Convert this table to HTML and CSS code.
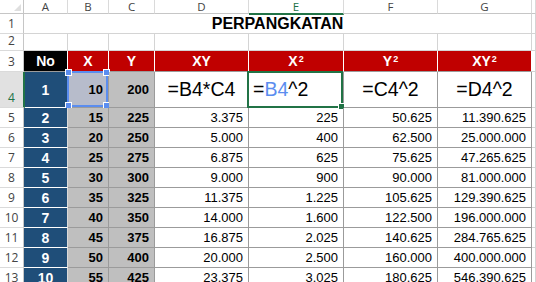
FILE: index.html
```html
<!DOCTYPE html>
<html>
<head>
<meta charset="utf-8">
<link rel="stylesheet" href="styles.css">
</head>
<body>
<div class="sheet">
  <div class="corner"><span class="tri"></span></div>
  <div class="ch">A</div><div class="ch">B</div><div class="ch">C</div><div class="ch">D</div><div class="ch sel">E</div><div class="ch">F</div><div class="ch">G</div><div class="ch last"></div>

  <div class="rh">1</div><div class="title">PERPANGKATAN</div><div class="c"></div>

  <div class="rh">2</div><div class="c"></div><div class="c"></div><div class="c"></div><div class="c"></div><div class="c"></div><div class="c"></div><div class="c"></div><div class="c"></div>

  <div class="rh">3</div><div class="hd blk">No</div><div class="hd">X</div><div class="hd">Y</div><div class="hd">XY</div><div class="hd">X<sup>2</sup></div><div class="hd">Y<sup>2</sup></div><div class="hd">XY<sup>2</sup></div><div class="c"></div>

  <div class="rh rsel">4</div><div class="no">1</div><div class="bc ref">10<span class="refbox"><i class="h tl"></i><i class="h tr"></i><i class="h bl"></i><i class="h br"></i></span></div><div class="bc">200</div><div class="f">=B4*C4</div><div class="f edit">=<span class="bref">B4</span>^2<span class="active"><i class="fill"></i></span></div><div class="f">=C4^2</div><div class="f">=D4^2</div><div class="c"></div>

  <div class="rh">5</div><div class="no">2</div><div class="bc">15</div><div class="bc">225</div><div class="n">3.375</div><div class="n">225</div><div class="n">50.625</div><div class="n">11.390.625</div><div class="c"></div>
  <div class="rh">6</div><div class="no">3</div><div class="bc">20</div><div class="bc">250</div><div class="n">5.000</div><div class="n">400</div><div class="n">62.500</div><div class="n">25.000.000</div><div class="c"></div>
  <div class="rh">7</div><div class="no">4</div><div class="bc">25</div><div class="bc">275</div><div class="n">6.875</div><div class="n">625</div><div class="n">75.625</div><div class="n">47.265.625</div><div class="c"></div>
  <div class="rh">8</div><div class="no">5</div><div class="bc">30</div><div class="bc">300</div><div class="n">9.000</div><div class="n">900</div><div class="n">90.000</div><div class="n">81.000.000</div><div class="c"></div>
  <div class="rh">9</div><div class="no">6</div><div class="bc">35</div><div class="bc">325</div><div class="n">11.375</div><div class="n">1.225</div><div class="n">105.625</div><div class="n">129.390.625</div><div class="c"></div>
  <div class="rh">10</div><div class="no">7</div><div class="bc">40</div><div class="bc">350</div><div class="n">14.000</div><div class="n">1.600</div><div class="n">122.500</div><div class="n">196.000.000</div><div class="c"></div>
  <div class="rh">11</div><div class="no">8</div><div class="bc">45</div><div class="bc">375</div><div class="n">16.875</div><div class="n">2.025</div><div class="n">140.625</div><div class="n">284.765.625</div><div class="c"></div>
  <div class="rh">12</div><div class="no">9</div><div class="bc">50</div><div class="bc">400</div><div class="n">20.000</div><div class="n">2.500</div><div class="n">160.000</div><div class="n">400.000.000</div><div class="c"></div>
  <div class="rh">13</div><div class="no">10</div><div class="bc">55</div><div class="bc">425</div><div class="n">23.375</div><div class="n">3.025</div><div class="n">180.625</div><div class="n">546.390.625</div><div class="c"></div>
</div>
</body>
</html>
```

FILE: styles.css
```css
* { box-sizing: border-box; margin: 0; padding: 0; }
html, body { width: 536px; height: 282px; overflow: hidden; background: #fff; }
body { font-family: "Liberation Sans", Arial, sans-serif; color: #000; }

.sheet {
  display: grid;
  grid-template-columns: 24px 44px 41px 46px 94px 95px 94px 94px 1fr;
  grid-template-rows: 14px 20px 17px 21px 36px repeat(9, 20px);
  width: 536px;
  font-size: 13px;
}
.sheet > div {
  border-right: 1px solid #d4d4d4;
  border-bottom: 1px solid #d4d4d4;
  display: flex;
  align-items: center;
  position: relative;
  white-space: nowrap;
}

/* headers */
.sheet > .corner { border-right-color: #c6c6c6; border-bottom-color: #c6c6c6; }
.tri {
  position: absolute; right: 2px; bottom: 2px;
  width: 0; height: 0;
  border-left: 7px solid transparent;
  border-bottom: 7px solid #dfdfdf;
}
.sheet > .ch {
  justify-content: center;
  font-family: "Open Sans", "Liberation Sans", sans-serif;
  font-size: 11.5px; line-height: 13px;
  color: #444;
  border-right-color: #dadada;
  border-bottom-color: #c6c6c6;
}
.sheet > .ch.sel { color: #217346; border-bottom: 2px solid #217346; margin-bottom: -1px; z-index: 2; }
.sheet > .rh {
  justify-content: center;
  align-items: flex-end;
  padding-bottom: 1px;
  font-family: "Open Sans", "Liberation Sans", sans-serif;
  font-size: 12px; line-height: 16px;
  color: #444;
  border-right-color: #c6c6c6;
  border-bottom-color: #dadada;
}
.sheet > .rh.rsel { background: #e1e1e1; color: #217346; border-right: 2px solid #217346; margin-right: -1px; z-index: 2; }

.sheet > .title {
  grid-column: 2 / span 7;
  justify-content: center;
  font-weight: bold;
  font-size: 16px;
}

/* table header row */
.sheet > .hd {
  background: #c00000;
  color: #fff;
  font-weight: bold;
  font-size: 14px;
  justify-content: center;
  border-right-color: #fff;
  border-bottom-color: #9b9b9b;
}
.sheet > .hd.blk { background: #000; }
.hd sup { font-size: 9px; position: relative; top: -2px; margin-left: 1px; }

/* No column */
.sheet > .no {
  background: #1f4e79;
  color: #fff;
  font-weight: bold;
  font-size: 14px;
  justify-content: center;
  border-right-color: #d9d9d9;
  border-bottom-color: #fff;
}

/* X / Y columns */
.sheet > .bc {
  background: #bfbfbf;
  font-weight: bold;
  justify-content: flex-end;
  padding-right: 5px;
  border-right-color: #9b9b9b;
  border-bottom-color: #9b9b9b;
}
.sheet > .bc.ref { background: #b7bccb; }
.refbox {
  position: absolute; left: -1px; top: -1px; right: 0; bottom: 0;
  border: 2px solid #5b8def;
}
.h {
  position: absolute; width: 7px; height: 7px;
  background: #5b8def; border: 1px solid #fff;
}
.h.tl { left: -4px; top: -4px; }
.h.tr { right: -4px; top: -4px; }
.h.bl { left: -4px; bottom: -4px; }
.h.br { right: -4px; bottom: -4px; }

/* formulas row */
.sheet > .f {
  font-size: 19.5px;
  justify-content: center;
  border-right-color: #9b9b9b;
  border-bottom-color: #9b9b9b;
}
.sheet > .f.edit { justify-content: flex-start; padding-left: 4px; }
.bref { color: #5b8def; }
.active {
  position: absolute; left: -2px; top: -1px; right: 0; bottom: -1px;
  border: 2px solid #217346;
}
.fill {
  position: absolute; right: -4px; bottom: -4px;
  width: 7px; height: 7px;
  background: #217346; border: 1px solid #fff;
}

/* numbers */
.sheet > .n {
  justify-content: flex-end;
  padding-right: 5px;
  border-right-color: #9b9b9b;
  border-bottom-color: #9b9b9b;
}
```
